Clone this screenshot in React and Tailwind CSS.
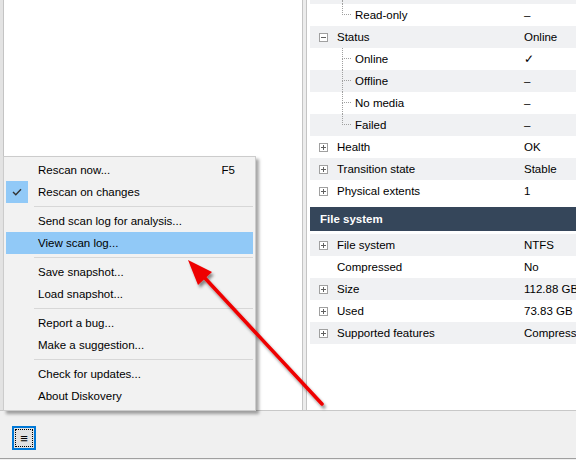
import React from 'react';

const volumeRows = [
  { label: 'Read-only', value: '–', child: true, last: true },
  { label: 'Status', value: 'Online', expand: 'minus' },
  { label: 'Online', value: '✓', child: true },
  { label: 'Offline', value: '–', child: true },
  { label: 'No media', value: '–', child: true },
  { label: 'Failed', value: '–', child: true, last: true },
  { label: 'Health', value: 'OK', expand: 'plus' },
  { label: 'Transition state', value: 'Stable', expand: 'plus' },
  { label: 'Physical extents', value: '1', expand: 'plus' },
];

const fsRows = [
  { label: 'File system', value: 'NTFS', expand: 'plus' },
  { label: 'Compressed', value: 'No' },
  { label: 'Size', value: '112.88 GB', expand: 'plus' },
  { label: 'Used', value: '73.83 GB', expand: 'plus', bar: true },
  { label: 'Supported features', value: 'Compression, Sparse files', expand: 'plus' },
];

const menu = [
  { label: 'Rescan now...', shortcut: 'F5' },
  { label: 'Rescan on changes', checked: true },
  'sep',
  { label: 'Send scan log for analysis...' },
  { label: 'View scan log...', active: true },
  'sep',
  { label: 'Save snapshot...' },
  { label: 'Load snapshot...' },
  'sep',
  { label: 'Report a bug...' },
  { label: 'Make a suggestion...' },
  'sep',
  { label: 'Check for updates...' },
  { label: 'About Diskovery' },
];

function ExpandBox({ kind }) {
  return (
    <svg width="9" height="9" viewBox="0 0 9 9" className="block">
      <rect x="0.5" y="0.5" width="8" height="8" fill="#fff" stroke="#a0a0a0" />
      <line x1="2" y1="4.5" x2="7" y2="4.5" stroke="#606060" />
      {kind === 'plus' && <line x1="4.5" y1="2" x2="4.5" y2="7" stroke="#606060" />}
    </svg>
  );
}

function PropRow({ row, gray }) {
  return (
    <div className={`flex h-[22px] items-center ${gray ? 'bg-[#f0f1f3]' : 'bg-white'}`}>
      {row.child ? (
        <div className="flex h-full w-[214px] shrink-0 items-center pl-[32px]">
          <div className="flex h-full w-[13px] shrink-0 flex-col">
            <div className="h-[11px] w-[9px] border-b border-l border-dotted border-[#a0a0a0]" />
            <div className={`h-[11px] ${row.last ? '' : 'border-l border-dotted border-[#a0a0a0]'}`} />
          </div>
          <span className="mt-[2px] whitespace-nowrap">{row.label}</span>
        </div>
      ) : (
        <div className="flex w-[214px] shrink-0 items-center pl-[9px]">
          <div className="mr-[9px] w-[9px] shrink-0">{row.expand && <ExpandBox kind={row.expand} />}</div>
          <span className="mt-[2px] whitespace-nowrap">{row.label}</span>
        </div>
      )}
      <div className="mt-[2px] flex items-center whitespace-nowrap">
        {row.value}
        {row.bar && <span className="ml-[4px] inline-block h-[3px] w-[10px] bg-[#f2c230]" />}
      </div>
    </div>
  );
}

export default function App() {
  return (
    <div className="relative flex h-[460px] w-[576px] flex-col overflow-hidden bg-[#f0f0f0] font-['Liberation_Sans',Arial,sans-serif] text-[11.5px] text-black">
      {/* Panels */}
      <div className="flex h-[411px] shrink-0 border-b border-[#c8c8c8]">
        <div className="w-[3px] shrink-0 bg-[#e3e3e3]" />
        <div className="w-[300px] shrink-0 border-x border-[#c4c4c4] bg-white" />
        <div className="w-[3px] shrink-0 bg-[#ececec]" />
        <div className="min-w-0 flex-1 overflow-hidden border-l border-[#c4c4c4] bg-white pl-[3px]">
          <div className="w-[300px]">
            <div className="h-[4px] bg-[#f0f1f3] pl-[32px]">
              <div className="h-full border-l border-dotted border-[#a0a0a0]" />
            </div>
            {volumeRows.map((row, i) => (
              <PropRow key={i} row={row} gray={i % 2 === 1} />
            ))}
            <div className="mt-[5px] flex h-[24px] items-center bg-[#35465a] pl-[10px] font-bold text-white">
              <span className="mt-[2px]">File system</span>
            </div>
            <div className="mt-[3px]">
              {fsRows.map((row, i) => (
                <PropRow key={i} row={row} gray={i % 2 === 0} />
              ))}
            </div>
          </div>
        </div>
      </div>

      {/* Toolbar */}
      <div className="h-[48px] shrink-0 border-b border-[#a0a0a0] pl-[12px] pt-[15px]">
        <div className="h-[24px] w-[24px] border-2 border-[#0078d7] bg-[#e1e1e1] p-[1px]">
          <div className="flex h-full w-full items-center justify-center border border-dotted border-black text-[13px] font-bold leading-none">
            ≡
          </div>
        </div>
      </div>

      {/* Context menu */}
      <div className="absolute left-[3px] top-[156px] w-[253px] border border-[#cccccc] bg-[#f2f2f2] px-[2px] pb-[3px] pt-[2px] shadow-[3px_3px_3px_rgba(0,0,0,0.35)]">
        {menu.map((item, i) =>
          item === 'sep' ? (
            <div key={i} className="flex h-[7px] items-center pl-[28px]">
              <div className="h-px flex-1 bg-[#d7d7d7]" />
            </div>
          ) : (
            <div key={i} className={`flex h-[22px] items-center ${item.active ? 'bg-[#91c9f7]' : ''}`}>
              <div className={`flex h-[22px] w-[22px] shrink-0 items-center justify-center ${item.checked ? 'bg-[#91c9f7]' : ''}`}>
                {item.checked && (
                  <svg width="10" height="8" viewBox="0 0 10 8">
                    <path d="M1 4 L3.8 6.8 L9 1.2" fill="none" stroke="#333" strokeWidth="1.4" />
                  </svg>
                )}
              </div>
              <span className="mt-[2px] flex-1 whitespace-nowrap pl-[10px]">{item.label}</span>
              {item.shortcut && <span className="mt-[2px] pr-[18px]">{item.shortcut}</span>}
            </div>
          )
        )}
      </div>

      {/* Annotation arrow */}
      <svg className="pointer-events-none absolute left-0 top-0" width="576" height="460">
        <defs>
          <filter id="sh" x="-20%" y="-20%" width="140%" height="140%">
            <feDropShadow dx="2" dy="3" stdDeviation="1.6" floodColor="#000" floodOpacity="0.45" />
          </filter>
        </defs>
        <g filter="url(#sh)">
          <line x1="322" y1="404" x2="203" y2="276" stroke="#ee0000" strokeWidth="3.5" strokeLinecap="round" />
          <polygon points="188,260 212,272 198,285" fill="#ee0000" />
        </g>
      </svg>
    </div>
  );
}
